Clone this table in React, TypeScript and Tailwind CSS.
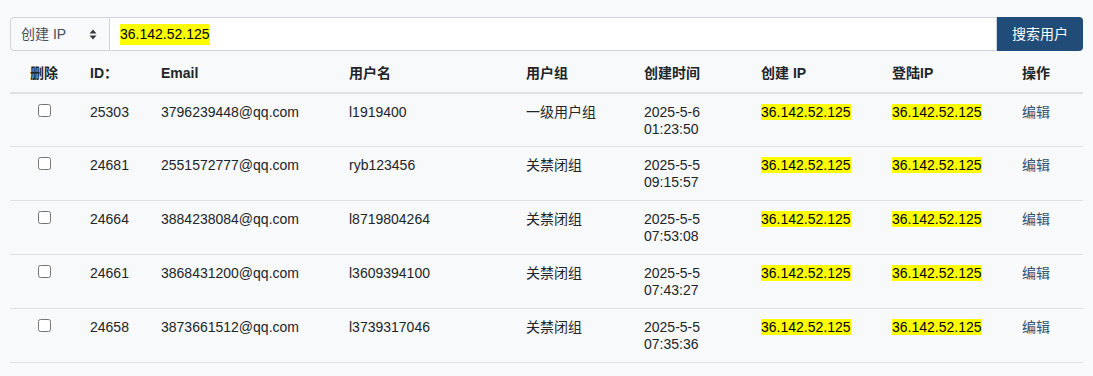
import React from 'react';

interface UserRow {
    id: number;
    email: string;
    username: string;
    group: string;
    date: string;
    time: string;
    createIp: string;
    loginIp: string;
}

const rows: UserRow[] = [
    { id: 25303, email: '3796239448@qq.com', username: 'l1919400', group: '一级用户组', date: '2025-5-6', time: '01:23:50', createIp: '36.142.52.125', loginIp: '36.142.52.125' },
    { id: 24681, email: '2551572777@qq.com', username: 'ryb123456', group: '关禁闭组', date: '2025-5-5', time: '09:15:57', createIp: '36.142.52.125', loginIp: '36.142.52.125' },
    { id: 24664, email: '3884238084@qq.com', username: 'l8719804264', group: '关禁闭组', date: '2025-5-5', time: '07:53:08', createIp: '36.142.52.125', loginIp: '36.142.52.125' },
    { id: 24661, email: '3868431200@qq.com', username: 'l3609394100', group: '关禁闭组', date: '2025-5-5', time: '07:43:27', createIp: '36.142.52.125', loginIp: '36.142.52.125' },
    { id: 24658, email: '3873661512@qq.com', username: 'l3739317046', group: '关禁闭组', date: '2025-5-5', time: '07:35:36', createIp: '36.142.52.125', loginIp: '36.142.52.125' },
];

const headers = ['ID：', 'Email', '用户名', '用户组', '创建时间', '创建 IP', '登陆IP', '操作'];

const Mark: React.FC<{ children: React.ReactNode }> = ({ children }) => (
    <span className="bg-[#ffff00] text-black">{children}</span>
);

export default function App() {
    return (
        <div
            className="min-h-[376px] bg-[#f8f9fa] px-[10px] pt-[17px] text-[14px] text-[#212529]"
            style={{ fontFamily: '"Liberation Sans", Arial, "Noto Sans CJK SC", sans-serif' }}
        >
            {/* search bar */}
            <div className="flex h-[34px]">
                <div className="flex w-[100px] items-center justify-between rounded-l-[4px] border border-[#ced4da] bg-[#f8f9fa] pl-[10px] pr-[12px] text-[#495057]">
                    <span>创建 IP</span>
                    <svg width="8" height="11" viewBox="0 0 8 11">
                        <path d="M4 0.5 L7.5 4.5 L0.5 4.5 Z" fill="#343a40" />
                        <path d="M4 10.5 L7.5 6.5 L0.5 6.5 Z" fill="#343a40" />
                    </svg>
                </div>
                <div className="flex flex-1 items-center border-y border-r border-[#ced4da] bg-white pl-[10px]">
                    <Mark>36.142.52.125</Mark>
                </div>
                <button className="w-[86px] rounded-r-[4px] bg-[#214c78] text-white">搜索用户</button>
            </div>

            {/* result table */}
            <table className="mt-[4px] w-[1073px] table-fixed border-collapse leading-[17px]">
                <colgroup>
                    <col className="w-[68px]" />
                    <col className="w-[71px]" />
                    <col className="w-[188px]" />
                    <col className="w-[177px]" />
                    <col className="w-[118px]" />
                    <col className="w-[117px]" />
                    <col className="w-[131px]" />
                    <col className="w-[130px]" />
                    <col className="w-[73px]" />
                </colgroup>
                <thead>
                    <tr className="border-b-2 border-[#dee2e6]">
                        <th className="px-[12px] py-[10px] text-center font-bold">删除</th>
                        {headers.map((h) => (
                            <th key={h} className="px-[12px] py-[10px] text-left font-bold">
                                {h}
                            </th>
                        ))}
                    </tr>
                </thead>
                <tbody>
                    {rows.map((r, i) => (
                        <tr
                            key={r.id}
                            className={`${i === 0 ? 'h-[53px]' : 'h-[54px]'} border-b border-[#dee2e6] align-top`}
                        >
                            <td className="px-[12px] pt-[10px] text-center">
                                <input type="checkbox" className="h-[13px] w-[13px] align-top" />
                            </td>
                            <td className="px-[12px] pt-[10px]">{r.id}</td>
                            <td className="px-[12px] pt-[10px]">{r.email}</td>
                            <td className="px-[12px] pt-[10px]">{r.username}</td>
                            <td className="px-[12px] pt-[10px]">{r.group}</td>
                            <td className="px-[12px] pt-[10px]">
                                {r.date}
                                <br />
                                {r.time}
                            </td>
                            <td className="px-[12px] pt-[10px]">
                                <Mark>{r.createIp}</Mark>
                            </td>
                            <td className="px-[12px] pt-[10px]">
                                <Mark>{r.loginIp}</Mark>
                            </td>
                            <td className="px-[12px] pt-[10px]">
                                <a className="cursor-pointer text-[#34506f]">编辑</a>
                            </td>
                        </tr>
                    ))}
                </tbody>
            </table>
        </div>
    );
}
